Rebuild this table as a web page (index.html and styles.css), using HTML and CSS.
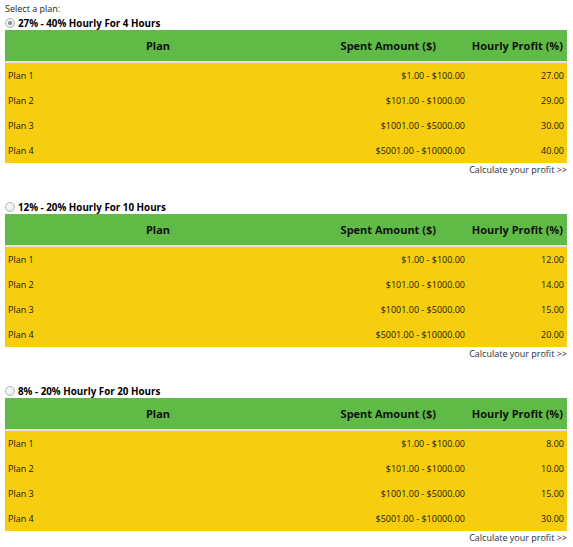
FILE: index.html
```html
<!DOCTYPE html>
<html>
<head>
<meta charset="utf-8">
<link rel="stylesheet" href="styles.css">
</head>
<body>
<div class="intro">Select a plan:</div>

<section class="plan-block">
  <label class="plan-title"><input type="radio" name="plan" class="radio" checked> 27% - 40% Hourly For 4 Hours</label>
  <table class="plans">
    <thead>
      <tr><th class="c-plan">Plan</th><th class="c-amount">Spent Amount ($)</th><th class="c-profit">Hourly Profit (%)</th></tr>
    </thead>
    <tbody>
      <tr><td class="c-plan">Plan 1</td><td class="c-amount">$1.00 - $100.00</td><td class="c-profit">27.00</td></tr>
      <tr><td class="c-plan">Plan 2</td><td class="c-amount">$101.00 - $1000.00</td><td class="c-profit">29.00</td></tr>
      <tr><td class="c-plan">Plan 3</td><td class="c-amount">$1001.00 - $5000.00</td><td class="c-profit">30.00</td></tr>
      <tr><td class="c-plan">Plan 4</td><td class="c-amount">$5001.00 - $10000.00</td><td class="c-profit">40.00</td></tr>
    </tbody>
  </table>
  <div class="calc">Calculate your profit &gt;&gt;</div>
</section>

<section class="plan-block">
  <label class="plan-title"><input type="radio" name="plan" class="radio"> 12% - 20% Hourly For 10 Hours</label>
  <table class="plans">
    <thead>
      <tr><th class="c-plan">Plan</th><th class="c-amount">Spent Amount ($)</th><th class="c-profit">Hourly Profit (%)</th></tr>
    </thead>
    <tbody>
      <tr><td class="c-plan">Plan 1</td><td class="c-amount">$1.00 - $100.00</td><td class="c-profit">12.00</td></tr>
      <tr><td class="c-plan">Plan 2</td><td class="c-amount">$101.00 - $1000.00</td><td class="c-profit">14.00</td></tr>
      <tr><td class="c-plan">Plan 3</td><td class="c-amount">$1001.00 - $5000.00</td><td class="c-profit">15.00</td></tr>
      <tr><td class="c-plan">Plan 4</td><td class="c-amount">$5001.00 - $10000.00</td><td class="c-profit">20.00</td></tr>
    </tbody>
  </table>
  <div class="calc">Calculate your profit &gt;&gt;</div>
</section>

<section class="plan-block">
  <label class="plan-title"><input type="radio" name="plan" class="radio"> 8% - 20% Hourly For 20 Hours</label>
  <table class="plans">
    <thead>
      <tr><th class="c-plan">Plan</th><th class="c-amount">Spent Amount ($)</th><th class="c-profit">Hourly Profit (%)</th></tr>
    </thead>
    <tbody>
      <tr><td class="c-plan">Plan 1</td><td class="c-amount">$1.00 - $100.00</td><td class="c-profit">8.00</td></tr>
      <tr><td class="c-plan">Plan 2</td><td class="c-amount">$101.00 - $1000.00</td><td class="c-profit">10.00</td></tr>
      <tr><td class="c-plan">Plan 3</td><td class="c-amount">$1001.00 - $5000.00</td><td class="c-profit">15.00</td></tr>
      <tr><td class="c-plan">Plan 4</td><td class="c-amount">$5001.00 - $10000.00</td><td class="c-profit">30.00</td></tr>
    </tbody>
  </table>
  <div class="calc">Calculate your profit &gt;&gt;</div>
</section>
</body>
</html>
```

FILE: styles.css
```css
html, body {
  margin: 0;
  padding: 0;
  background: #ffffff;
}
body {
  padding: 1px 6px 0 5px;
  font-family: "Open Sans", "DejaVu Sans", sans-serif;
  font-size: 9px;
  color: #1a1a1a;
}
.intro {
  height: 15px;
  line-height: 15px;
  color: #222;
}
.plan-block {
  margin-bottom: 23px;
}
.plan-title {
  display: flex;
  align-items: center;
  gap: 3px;
  height: 14px;
  font-weight: bold;
  font-size: 9.8px;
  color: #000;
}
.radio {
  appearance: none;
  -webkit-appearance: none;
  margin: 0;
  width: 10px;
  height: 10px;
  border-radius: 50%;
  border: 1px solid #b5b5b5;
  background: radial-gradient(circle at 40% 35%, #ffffff, #dcdcdc);
  display: grid;
  place-items: center;
}
.radio:checked::after {
  content: "";
  width: 4px;
  height: 4px;
  border-radius: 50%;
  background: #8a8a8a;
}
.plans {
  width: 100%;
  border-collapse: separate;
  border-spacing: 0;
  table-layout: fixed;
}
.plans th,
.plans td {
  box-sizing: border-box;
  padding: 0;
  white-space: nowrap;
}
.plans th {
  background: #5fbb46;
  height: 33px;
  font-size: 11px;
  font-weight: bold;
  color: #111;
  border-bottom: 2px solid #e4e4e4;
}
.plans td {
  background: #f6cd0f;
  height: 25px;
  color: #1a1a00;
}
.plans .c-plan {
  width: 306px;
  text-align: left;
  padding-left: 3px;
}
.plans th.c-plan {
  text-align: center;
  padding-left: 0;
}
.plans .c-amount {
  width: 156px;
  text-align: right;
  padding-right: 2px;
}
.plans th.c-amount {
  padding-right: 31px;
}
.plans .c-profit {
  text-align: right;
  padding-right: 3px;
}
.plans th.c-profit {
  padding-right: 4px;
}
.calc {
  text-align: right;
  height: 14px;
  line-height: 14px;
  color: #2a2f3a;
}
```
